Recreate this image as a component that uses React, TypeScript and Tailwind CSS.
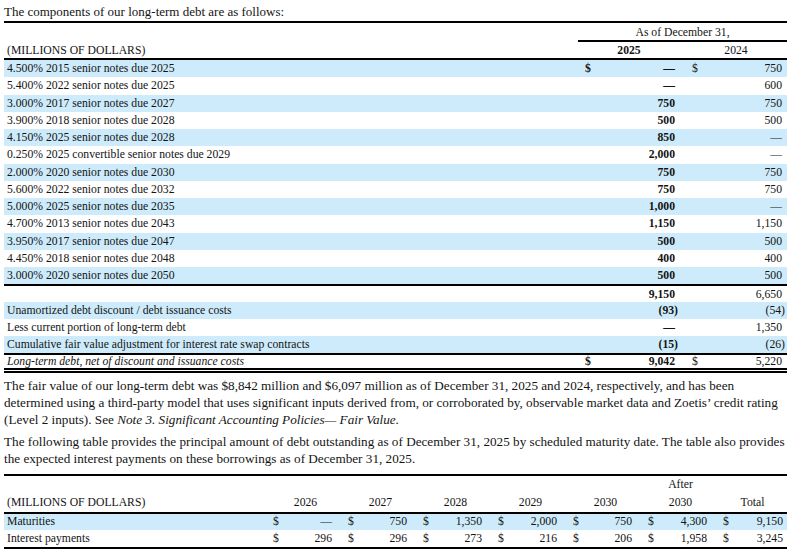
const blue = 'bg-[#cdebfb]';

type NoteRow = { label: string; cur: string; prev: string; dollar?: boolean };

const notes: NoteRow[] = [
  { label: '4.500% 2015 senior notes due 2025', cur: '—', prev: '750', dollar: true },
  { label: '5.400% 2022 senior notes due 2025', cur: '—', prev: '600' },
  { label: '3.000% 2017 senior notes due 2027', cur: '750', prev: '750' },
  { label: '3.900% 2018 senior notes due 2028', cur: '500', prev: '500' },
  { label: '4.150% 2025 senior notes due 2028', cur: '850', prev: '—' },
  { label: '0.250% 2025 convertible senior notes due 2029', cur: '2,000', prev: '—' },
  { label: '2.000% 2020 senior notes due 2030', cur: '750', prev: '750' },
  { label: '5.600% 2022 senior notes due 2032', cur: '750', prev: '750' },
  { label: '5.000% 2025 senior notes due 2035', cur: '1,000', prev: '—' },
  { label: '4.700% 2013 senior notes due 2043', cur: '1,150', prev: '1,150' },
  { label: '3.950% 2017 senior notes due 2047', cur: '500', prev: '500' },
  { label: '4.450% 2018 senior notes due 2048', cur: '400', prev: '400' },
  { label: '3.000% 2020 senior notes due 2050', cur: '500', prev: '500' },
];

const years = ['2026', '2027', '2028', '2029', '2030', '2030', 'Total'];
const maturities = ['—', '750', '1,350', '2,000', '750', '4,300', '9,150'];
const interest = ['296', '296', '273', '216', '206', '1,958', '3,245'];

function Cell({
  value,
  dollar,
  bold,
  first,
}: {
  value: string;
  dollar?: boolean;
  bold?: boolean;
  first?: boolean;
}) {
  const neg = value.startsWith('(');
  return (
    <div
      className={`flex items-center ${first ? 'pl-[7px]' : 'pl-[12px]'} pr-[5px] ${
        bold ? 'font-bold' : ''
      }`}
    >
      <span>{dollar ? '$' : ''}</span>
      <span className={`ml-auto ${neg ? '-mr-[3px]' : ''}`}>{value}</span>
    </div>
  );
}

function DebtRow({
  label,
  cur,
  prev,
  dollar,
  shaded,
  h = 'h-[17px]',
  italic,
}: {
  label: string;
  cur: string;
  prev: string;
  dollar?: boolean;
  shaded?: boolean;
  h?: string;
  italic?: boolean;
}) {
  return (
    <div
      className={`grid grid-cols-[574px_102px_107px] ${h} items-center ${shaded ? blue : ''}`}
    >
      <div className={`pl-[3px] whitespace-nowrap ${italic ? 'italic' : ''}`}>{label}</div>
      <Cell value={cur} dollar={dollar} bold first />
      <Cell value={prev} dollar={dollar} />
    </div>
  );
}

function MaturityRow({
  label,
  values,
  shaded,
  h,
}: {
  label: string;
  values: string[];
  shaded?: boolean;
  h: string;
}) {
  return (
    <div className={`flex ${h} items-center ${shaded ? blue : ''}`}>
      <div className="w-[264px] pl-[3px]">{label}</div>
      {values.map((v, i) => (
        <div
          key={i}
          className={`flex ${i === 6 ? 'w-[69px] pr-[4px]' : 'w-[75px] pr-[11px]'} pl-[5px]`}
        >
          <span>$</span>
          <span className="ml-auto">{v}</span>
        </div>
      ))}
    </div>
  );
}

export default function App() {
  return (
    <div className="w-[800px] h-[559px] overflow-hidden bg-white text-[#141414] font-['Liberation_Serif',_'Times_New_Roman',_serif]">
      <div className="w-[787px] pl-[4px]">
        <p className="text-[13px] h-[21px] leading-[20px] pt-[2px] whitespace-nowrap">
          The components of our long-term debt are as follows:
        </p>
        <div className="h-[2px] bg-black" />

        <div className="text-[11.7px]">
          {/* header */}
          <div className="grid grid-cols-[574px_209px] h-[17px] items-end">
            <div />
            <div className="text-center leading-[14px] border-b-2 border-black h-[19px] pt-[3px]">
              As of December 31,
            </div>
          </div>
          <div className="grid grid-cols-[574px_102px_107px] h-[18px] items-center border-b-2 border-black mt-[2px]">
            <div className="pl-[3px] whitespace-nowrap">(MILLIONS OF DOLLARS)</div>
            <div className="text-center font-bold">2025</div>
            <div className="text-center pl-[5px]">2024</div>
          </div>

          {notes.map((n, i) => (
            <DebtRow
              key={i}
              label={n.label}
              cur={n.cur}
              prev={n.prev}
              dollar={n.dollar}
              shaded={i % 2 === 0}
              h="h-[17.25px]"
            />
          ))}
          <div className="h-[2px] bg-black" />
          <DebtRow label="" cur="9,150" prev="6,650" h="h-[16px]" />
          <DebtRow label="Unamortized debt discount / debt issuance costs" cur="(93)" prev="(54)" shaded />
          <DebtRow label="Less current portion of long-term debt" cur="—" prev="1,350" />
          <DebtRow
            label="Cumulative fair value adjustment for interest rate swap contracts"
            cur="(15)"
            prev="(26)"
            shaded
          />
          <div className="h-[1.5px] bg-black" />
          <div className="leading-[13px]">
            <DebtRow
              label="Long-term debt, net of discount and issuance costs"
              cur="9,042"
              prev="5,220"
              dollar
              italic
              h="h-[13px]"
            />
          </div>
          <div className="h-[5px] border-y-2 border-black" />
        </div>

        <div className="text-[13.2px] leading-[17px] whitespace-nowrap">
          <p className="pt-[4.5px]">
            The fair value of our long-term debt was $8,842 million and $6,097 million as of December 31, 2025
            and 2024, respectively, and has been
            <br />
            determined using a third-party model that uses significant inputs derived from, or corroborated by,
            observable market data and Zoetis’ credit rating
            <br />
            (Level 2 inputs). See <i>Note 3. Significant Accounting Policies— Fair Value.</i>
          </p>
          <p className="pt-[5px]">
            The following table provides the principal amount of debt outstanding as of December 31, 2025 by
            scheduled maturity date. The table also provides
            <br />
            the expected interest payments on these borrowings as of December 31, 2025.
          </p>
        </div>

        <div className="h-[2px] bg-black mt-[7px]" />
        <div className="text-[11.7px]">
          <div className="flex h-[18px] items-center">
            <div className="w-[639px]" />
            <div className="w-[75px] text-center">After</div>
          </div>
          <div className="flex h-[18px] items-center border-b-2 border-black box-content">
            <div className="w-[264px] pl-[3px] whitespace-nowrap">(MILLIONS OF DOLLARS)</div>
            {years.map((y, i) => (
              <div key={i} className={`${i === 6 ? 'w-[69px]' : 'w-[75px]'} text-center`}>
                {y}
              </div>
            ))}
          </div>
          <MaturityRow label="Maturities" values={maturities} shaded h="h-[16px]" />
          <MaturityRow label="Interest payments" values={interest} h="h-[17px]" />
          <div className="h-[2px] bg-black" />
        </div>
      </div>
    </div>
  );
}
